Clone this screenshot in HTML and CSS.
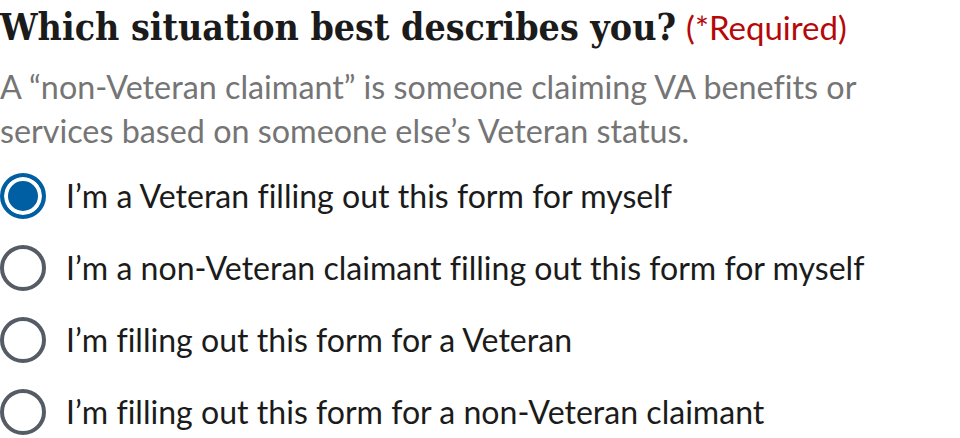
FILE: index.html
```html
<!DOCTYPE html>
<html lang="en">
<head>
<meta charset="utf-8">
<title>Which situation best describes you?</title>
<link rel="stylesheet" href="styles.css">
</head>
<body>
<fieldset class="field">
  <legend class="legend"><span class="legend-title">Which situation best describes you?</span><span class="required">(*Required)</span></legend>
  <p class="hint">A “non-Veteran claimant” is someone claiming VA benefits or services based on someone else’s Veteran status.</p>
  <div class="options">
    <label class="option"><span class="radio checked"></span><span class="label">I’m a Veteran filling out this form for myself</span></label>
    <label class="option"><span class="radio"></span><span class="label">I’m a non-Veteran claimant filling out this form for myself</span></label>
    <label class="option"><span class="radio"></span><span class="label">I’m filling out this form for a Veteran</span></label>
    <label class="option"><span class="radio"></span><span class="label">I’m filling out this form for a non-Veteran claimant</span></label>
  </div>
</fieldset>
</body>
</html>
```
FILE: styles.css
```css
html, body {
  margin: 0;
  padding: 0;
  background: #fff;
}
body {
  font-family: Lato, "Noto Sans", sans-serif;
  font-variant-ligatures: none;
  color: #1b1b1b;
}
.field {
  margin: 0;
  padding: 0;
  border: 0;
  min-width: 0;
}
.legend {
  padding: 0;
  display: block;
  width: 100%;
  line-height: 54px;
  white-space: nowrap;
}
.legend-title {
  font-family: "DejaVu Serif Condensed", "DejaVu Serif", serif;
  font-weight: bold;
  font-size: 37.2px;
  color: #1b1b1b;
}
.required {
  margin-left: 10px;
  font-family: Lato, sans-serif;
  font-size: 33px;
  color: #b50909;
}
.hint {
  margin: 4px 0 0;
  font-size: 32.3px;
  line-height: 44px;
  color: #757575;
  max-width: 890px;
}
.options {
  display: flex;
  flex-direction: column;
  margin-top: 7px;
}
.option {
  display: flex;
  align-items: center;
  gap: 20px;
  height: 72px;
}
.radio {
  flex: none;
  box-sizing: border-box;
  width: 46px;
  height: 46px;
  border-radius: 50%;
  border: 4px solid #565c65;
  background: #fff;
}
.radio.checked {
  border-color: #005ea2;
  background: #005ea2;
  box-shadow: inset 0 0 0 4px #fff;
}
.label {
  font-size: 32.1px;
  line-height: 44px;
  color: #1b1b1b;
}
```
